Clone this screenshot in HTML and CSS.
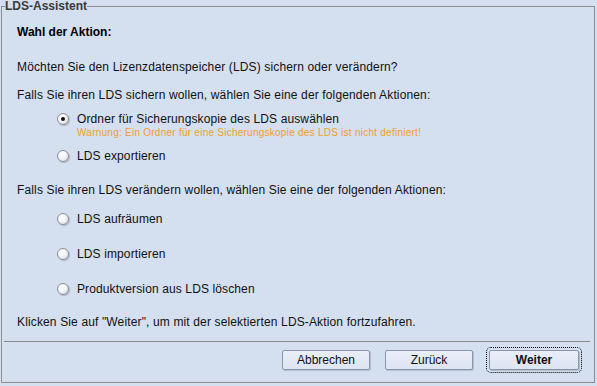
FILE: index.html
```html
<!DOCTYPE html>
<html lang="de">
<head>
<meta charset="utf-8">
<title>LDS-Assistent</title>
<link rel="stylesheet" href="styles.css">
</head>
<body>
<fieldset class="panel">
  <legend class="panel-title">LDS-Assistent</legend>
  <div class="content">
    <div class="heading">Wahl der Aktion:</div>
    <p class="text intro">Möchten Sie den Lizenzdatenspeicher (LDS) sichern oder verändern?</p>
    <p class="text sub">Falls Sie ihren LDS sichern wollen, wählen Sie eine der folgenden Aktionen:</p>
    <label class="radio r-first"><span class="dot checked"></span><span>Ordner für Sicherungskopie des LDS auswählen</span></label>
    <div class="warning">Warnung: Ein Ordner für eine Sicherungskopie des LDS ist nicht definiert!</div>
    <label class="radio r-second"><span class="dot"></span><span>LDS exportieren</span></label>
    <p class="text sub2">Falls Sie ihren LDS verändern wollen, wählen Sie eine der folgenden Aktionen:</p>
    <label class="radio r-a"><span class="dot"></span><span>LDS aufräumen</span></label>
    <label class="radio r-b"><span class="dot"></span><span>LDS importieren</span></label>
    <label class="radio r-b"><span class="dot"></span><span>Produktversion aus LDS löschen</span></label>
    <p class="text outro">Klicken Sie auf "Weiter", um mit der selektierten LDS-Aktion fortzufahren.</p>
  </div>
  <div class="separator"></div>
  <div class="buttons">
    <button class="btn">Abbrechen</button>
    <button class="btn">Zurück</button>
    <button class="btn primary">Weiter</button>
  </div>
</fieldset>
</body>
</html>
```
FILE: styles.css
```css
html, body {
  margin: 0;
  padding: 0;
  width: 597px;
  height: 386px;
  background: #d4dfef;
  overflow: hidden;
  font-family: "Liberation Sans", Arial, sans-serif;
  font-size: 12px;
  color: #111;
}

.panel {
  box-sizing: border-box;
  margin: 0 2px 0 1px;
  padding: 0;
  height: 383px;
  border: 1px solid #8d8d8d;
  min-width: 0;
}

.panel-title {
  margin-left: 3px;
  padding: 0;
  font-weight: bold;
  font-size: 12px;
  line-height: 13px;
  color: #3a3a3a;
}

.content {
  padding: 0 15px;
}

.heading {
  margin-top: 11px;
  font-weight: bold;
  line-height: 16px;
  color: #000;
}

.text {
  margin: 0;
  line-height: 16px;
  letter-spacing: 0.14px;
}

.intro { margin-top: 19px; }
.sub { margin-top: 12px; }
.sub2 { margin-top: 18px; }
.outro { margin-top: 17px; }

.radio {
  display: flex;
  align-items: center;
  height: 16px;
  line-height: 16px;
  padding-left: 40px;
  gap: 8px;
  letter-spacing: 0.12px;
}

.r-first { margin-top: 8px; }
.r-second { margin-top: 9px; }
.r-a { margin-top: 13px; }
.r-b { margin-top: 19px; }

.dot {
  box-sizing: border-box;
  width: 12px;
  height: 12px;
  border-radius: 50%;
  border: 1px solid #8e8e8e;
  background: radial-gradient(circle at 35% 30%, #ffffff 0%, #f2f4f8 45%, #d2d6de 100%);
  box-shadow: 1px 1px 1px rgba(90, 100, 120, 0.35);
  position: relative;
  flex: none;
}

.dot.checked::after {
  content: "";
  position: absolute;
  left: 3px;
  top: 3px;
  width: 4px;
  height: 4px;
  border-radius: 50%;
  background: #111;
}

.warning {
  padding-left: 60px;
  font-size: 10px;
  line-height: 12px;
  color: #f0a028;
  letter-spacing: 0.25px;
}

.separator {
  margin: 11px 4px 0 2px;
  height: 1px;
  background: #8a8a8a;
}

.buttons {
  display: flex;
  justify-content: flex-end;
  gap: 15px;
  margin-top: 8px;
  padding-right: 15px;
}

.btn {
  box-sizing: border-box;
  width: 88px;
  height: 20px;
  padding: 0;
  font-family: "Liberation Sans", Arial, sans-serif;
  font-size: 12px;
  color: #111;
  background: linear-gradient(#e9eef8, #dde4f3);
  border: 1px solid #8b95aa;
  border-radius: 2px;
  box-shadow: 1px 1px 0 rgba(120, 130, 150, 0.35);
}

.btn.primary {
  width: 90px;
  margin-left: 1px;
  font-weight: bold;
  outline: 1px dotted #000;
  outline-offset: 2px;
}
```
